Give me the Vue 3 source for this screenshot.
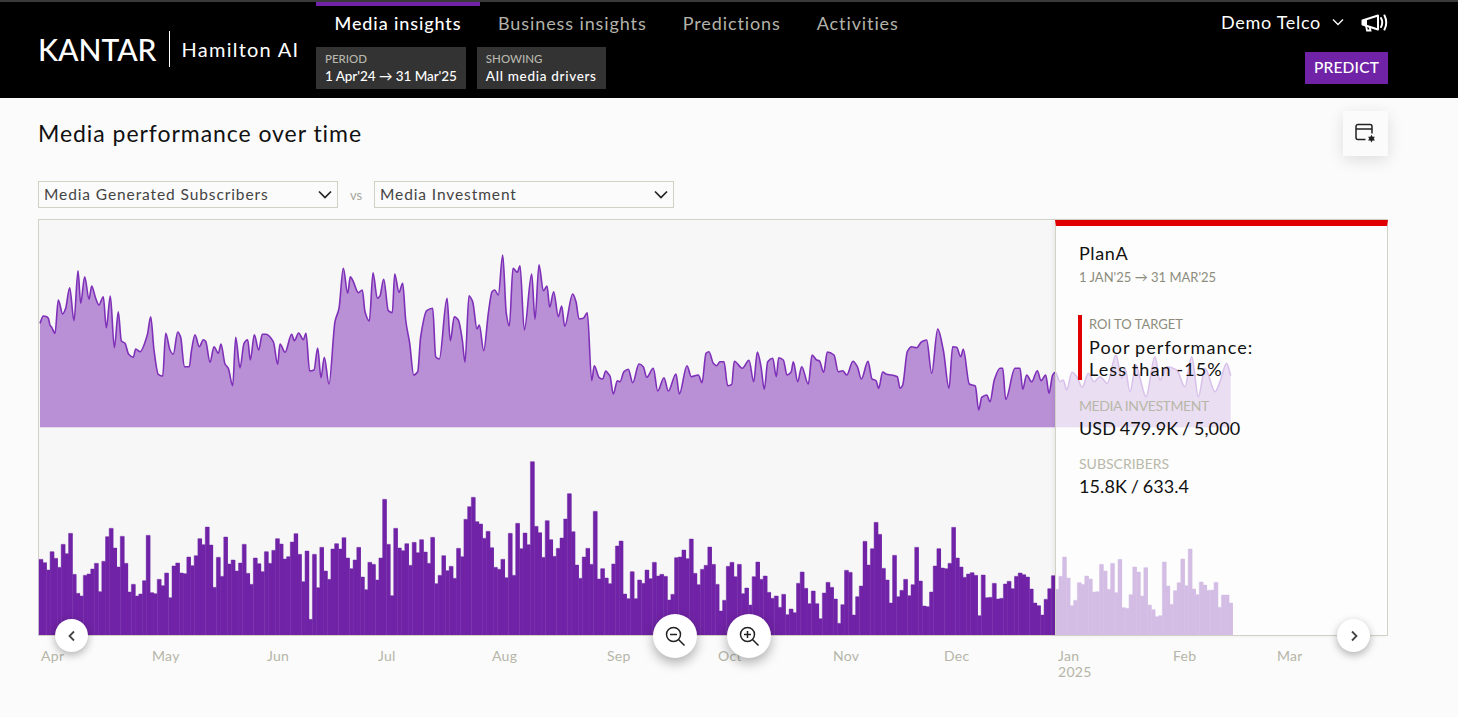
<script setup>
const tabs = ['Media insights', 'Business insights', 'Predictions', 'Activities']

// Daily bar tops, as read per chart section: [baseline, tops]
const barSections = [
  [555, [328,338,360,305,325,352,283,311,250,373,430,438,376,372,357,340,425,334,260,235,294,351,259,340,426,403,438,432,392,256,428,431,388,407,369,443,348,339,369,371,321,347,317,266,284,231,285,412,322,379,261,342,330,363,339,283,370,403,324,341,365,305,340,301,266,282,327,320,276,251,313,395,303,508,313,413,292,363,388]],
  [555, [297,281,297,263,324,356,330,292,381,419,337,343,390,324,148,283,437,235,294,302,281,346,277,308,269,306,340,262,401,376,317,362,349,385,295,320,208,170,142,215,222,265,244,293,352,358,328,383,250,376,220,296,249,284,35,229,248,322,212,269,319,295,264,207,131,245,345,385,321,295,343,184,387,356,384,401,342,288,273]],
  [405, [282,296,215,296,240,250,210,236,187,228,223,229,300,283,173,171,150,176,117,220,254,208,196,141,193,253,333,301,199,187,230,193,281,264,315,230,186,238,228,277,295,288,322,283,344,327,338,250,216,265,311,273,311,356,279,247,262,297,370,314,211,217,345,290,258,124,195,146,67,103,205,240,309,166,290,271,238,287]],
  [405, [254,142,243,318,320,276,198,146,204,206,190,82,174,201,232,222,218,226,347,225,293,292,250,297,295,252,244,266,229,219,224,231,267,309,317,345,298,266,227,268,229,171,234,317,301,248,253,228,237,276,275,193,213,268,190,278,178,323,325,284,201,216,288,203,315,329,350,347,186,258,313,272,248,177,257,147,267,284,246,255,271,270,247,322,285,285,309]],
]
const heights = barSections.flatMap(([base, tops]) => tops.map((t) => (base - t) / 3))
const barStart = 39
const barStep = (1232.5 - barStart) / heights.length
const barBase = 635
const bars = heights.map((h, i) => ({
  x: barStart + i * barStep,
  y: barBase - h,
  w: barStep + 0.4,
  h,
}))
// Stepped outline that gives the bars their pale top edge
const barOutline =
  `M${barStart} ${barBase}` +
  bars.map((b) => `V${b.y.toFixed(1)}H${(b.x + barStep).toFixed(1)}`).join('') +
  `V${barBase}`

// Line samples per chart section: [originX, originY, flat x,y list at 3x]
const lineSections = [
  [30, 240, [30,250,40,228,50,230,55,235,60,255,65,262,75,280,85,180,98,222,107,205,119,143,132,242,144,92,152,190,164,110,177,178,185,138,197,175,207,195,220,170,229,263,241,168,253,323,265,215,274,302,285,310,296,343,310,352,317,327,330,335,352,285,362,230,372,330,385,403,398,408,407,280,420,330,430,343,443,276,452,292,463,380,478,380,484,335,495,284,508,320,520,299,527,304,540,367,552,320,565,340,573,312,585,372,595,385,608,437,617,292,630,384,642,310,653,299,661,360,673,284,686,330,697,283,708,283,730,305,743,373,750,312,765,337,785,283,793,302,806,279,820,299,828,280,839,393,852,390,863,324,873,413,883,352,897,432]],
  [320, 240, [45,245,57,205,70,85,83,160,91,110,100,125,115,158,127,150,135,215,148,243,159,98,172,175,180,168,191,118,205,212,217,218,224,102,237,157,248,130,257,240,269,310,281,405,293,395,302,290,320,212,338,205,347,350,358,357,381,175,391,302,403,230,415,240,427,300,435,367,447,167,458,185,471,267,478,255,491,332,505,220,516,155,524,150,535,165,548,45,559,220,568,258,579,85,592,97,600,77,613,270,635,102,645,238,657,74,670,152,681,138,689,202,701,155,715,230,725,198,734,259,758,162,768,185,777,237,790,235,802,218,815,422,823,377,837,412,848,417,857,393,866,403]],
  [610, 320, [0,168,10,222,22,182,30,185,42,155,55,148,68,188,87,132,100,140,110,172,130,145,143,213,162,173,175,213,198,162,208,222,231,137,244,170,265,165,276,188,288,100,297,95,310,130,320,137,330,125,342,125,353,197,365,193,373,124,397,145,417,121,431,185,442,96,453,140,463,208,473,125,488,115,499,170,506,113,520,120,531,165,543,157,550,125,563,185,575,140,595,192,606,105,620,120,628,122,641,157,652,96,672,105,685,155,698,152,710,165,729,124,742,140,754,177,774,124,786,177,798,182,806,205,818,156,830,163,845,165,862,170]],
  [900, 310, [0,235,8,225,22,125,35,110,50,113,65,95,80,90,95,190,113,57,130,120,147,235,158,110,170,112,182,140,190,118,208,222,226,228,236,300,245,262,260,255,270,275,283,210,300,175,308,175,317,268,345,175,360,175,368,238,380,195,395,215,412,182,423,212,437,195,447,250,458,195,466,187,480,215,490,210,500,240,516,187,530,200,547,232,565,190,582,215,600,200,622,220,648,135,665,205,675,175,690,245,708,165,720,205,738,260,765,140,780,210,800,170,830,180,855,230,875,140,895,260,915,175,945,245,960,215,980,160,992,197]],
]
const points = lineSections.flatMap(([ox, oy, list]) => {
  const out = []
  for (let i = 0; i < list.length; i += 2) {
    out.push([ox + list[i] / 3, oy + list[i + 1] / 3])
  }
  return out
})

function monotonePath(pts) {
  const n = pts.length
  const slopes = pts.slice(0, -1).map((p, i) => (pts[i + 1][1] - p[1]) / (pts[i + 1][0] - p[0]))
  const m = pts.map((_, i) => {
    if (i === 0) return slopes[0]
    if (i === n - 1) return slopes[n - 2]
    const a = slopes[i - 1]
    const b = slopes[i]
    return a * b <= 0 ? 0 : (2 * a * b) / (a + b)
  })
  let d = `M${pts[0][0].toFixed(1)} ${pts[0][1].toFixed(1)}`
  for (let i = 0; i < n - 1; i++) {
    const h = (pts[i + 1][0] - pts[i][0]) / 3
    d += `C${(pts[i][0] + h).toFixed(1)} ${(pts[i][1] + m[i] * h).toFixed(1)} ${(pts[i + 1][0] - h).toFixed(1)} ${(pts[i + 1][1] - m[i + 1] * h).toFixed(1)} ${pts[i + 1][0].toFixed(1)} ${pts[i + 1][1].toFixed(1)}`
  }
  return d
}
const linePath = monotonePath(points)
const first = points[0]
const last = points[points.length - 1]
const areaPath = `${linePath}L${last[0]} 427L${first[0]} 427Z`

const months = [
  ['Apr', 41], ['May', 152], ['Jun', 267], ['Jul', 378], ['Aug', 492], ['Sep', 607],
  ['Oct', 718], ['Nov', 833], ['Dec', 944], ['Jan', 1058], ['Feb', 1173], ['Mar', 1277],
]
</script>

<template>
  <div class="page">
    <header class="topbar">
      <div class="brand">
        <span class="logo">KANTAR</span>
        <span class="product">Hamilton AI</span>
      </div>
      <div class="centre">
        <nav class="tabs">
          <a v-for="(t, i) in tabs" :key="t" class="tab" :class="{ active: i === 0 }">{{ t }}</a>
        </nav>
        <div class="chips">
          <div class="chip">
            <span class="chip-label">PERIOD</span>
            <span class="chip-value tight">1 Apr'24 → 31 Mar'25</span>
          </div>
          <div class="chip">
            <span class="chip-label">SHOWING</span>
            <span class="chip-value wide">All media drivers</span>
          </div>
        </div>
      </div>
      <div class="right">
        <div class="account">
          <span class="client">Demo Telco</span>
          <svg class="client-chev" width="12" height="8" viewBox="0 0 12 8"><path d="M1 1.500l5 5 5-5" fill="none" stroke="#fff" stroke-width="1.300" /></svg>
          <svg class="mega" width="27" height="18" viewBox="0 0 27 18" fill="none" stroke="#fff">
            <path d="M1.500 6.500L17 1.500v14L1.500 10.500z" stroke-width="2" stroke-linejoin="round" />
            <path d="M1 6h5v5H1z" fill="#fff" stroke="none" />
            <path d="M5 11.500l1 5h3.500l-1-4" stroke-width="1.800" />
            <path d="M20 4q2.500 4.500 0 9M23.500 1.500q3.500 7 0 14" stroke-width="2" stroke-linecap="round" />
          </svg>
        </div>
        <button class="predict">PREDICT</button>
      </div>
    </header>

    <main class="content">
      <div class="title-row">
        <h1>Media performance over time</h1>
        <button class="config" aria-label="Configure">
          <svg width="22" height="22" viewBox="0 0 22 22" fill="none" stroke="#222">
            <path d="M10.500 16.500H3A2 2 0 0 1 1 14.500V3.500A2 2 0 0 1 3 1.500h12A2 2 0 0 1 17 3.500V10.500M1 6h16" stroke-width="1.500" />
            <path d="M16.500 11.700l1.100 2h2.300l-1.100 1.900 1.100 1.900h-2.300l-1.100 2-1.100-2h-2.300l1.100-1.900-1.100-1.900h2.300z" fill="#222" stroke="none" />
          </svg>
        </button>
      </div>

      <div class="selects">
        <div class="select">
          <span>Media Generated Subscribers</span>
          <svg width="14" height="9" viewBox="0 0 14 9"><path d="M1 1.500l6 6 6-6" fill="none" stroke="#222" stroke-width="1.700" /></svg>
        </div>
        <span class="vs">vs</span>
        <div class="select">
          <span>Media Investment</span>
          <svg width="14" height="9" viewBox="0 0 14 9"><path d="M1 1.500l6 6 6-6" fill="none" stroke="#222" stroke-width="1.700" /></svg>
        </div>
      </div>

      <section class="chart">
        <svg class="plot" width="1350" height="470" viewBox="38 219 1350 470">
          <rect x="38.500" y="219.500" width="1349" height="416" fill="#f7f7f7" stroke="#d2d2c4" />
          <rect x="40" y="427" width="1191" height="1" fill="#e4d8ee" />
          <path :d="areaPath" fill="#b98fd6" />
          <path :d="linePath" fill="none" stroke="#7e30b8" stroke-width="1.600" />
          <path :d="barOutline" fill="none" stroke="#b79ad2" stroke-width="1" />
          <g class="bars">
            <rect v-for="(b, i) in bars" :key="i" :x="b.x" :y="b.y" :width="b.w" :height="b.h" />
          </g>
          <g class="months">
            <text v-for="m in months" :key="m[0]" :x="m[1]" y="661">{{ m[0] }}</text>
            <text x="1058" y="677">2025</text>
          </g>
        </svg>

        <aside class="panel">
          <div class="plan">PlanA</div>
          <div class="dates">1 JAN'25 → 31 MAR'25</div>
          <div class="roi">
            <div class="roi-label">ROI TO TARGET</div>
            <div class="roi-value">Poor performance:<br />Less than -15%</div>
          </div>
          <div class="metric">
            <div class="metric-label narrow">MEDIA INVESTMENT</div>
            <div class="metric-value">USD 479.9K / 5,000</div>
          </div>
          <div class="metric">
            <div class="metric-label">SUBSCRIBERS</div>
            <div class="metric-value">15.8K / 633.4</div>
          </div>
        </aside>

        <button class="round small prev" aria-label="Previous">
          <svg width="10" height="12" viewBox="0 0 10 12"><path d="M7 1.500L2.500 6 7 10.500" fill="none" stroke="#444" stroke-width="1.800" /></svg>
        </button>
        <button class="round large zoom-out" aria-label="Zoom out">
          <svg width="22" height="22" viewBox="0 0 22 22" fill="none" stroke="#222" stroke-width="1.500">
            <circle cx="9.500" cy="9.500" r="7" /><path d="M6 9.500h7M14.500 14.500l6 6" />
          </svg>
        </button>
        <button class="round large zoom-in" aria-label="Zoom in">
          <svg width="22" height="22" viewBox="0 0 22 22" fill="none" stroke="#222" stroke-width="1.500">
            <circle cx="9.500" cy="9.500" r="7" /><path d="M6 9.500h7M9.500 6v7M14.500 14.500l6 6" />
          </svg>
        </button>
        <button class="round small next" aria-label="Next">
          <svg width="10" height="12" viewBox="0 0 10 12"><path d="M3 1.500L7.500 6 3 10.500" fill="none" stroke="#444" stroke-width="1.800" /></svg>
        </button>
      </section>
    </main>
  </div>
</template>

<style>
html, body { margin: 0; background: #fbfbfb; overflow: hidden; }
</style>

<style scoped>
.page {
  width: 1458px;
  height: 717px;
  background: #fbfbfb;
  font-family: Lato, "Noto Sans", sans-serif;
  color: #111;
  overflow: hidden;
}
.topbar {
  box-sizing: border-box;
  height: 98px;
  background: #000;
  border-top: 2px solid #3a3a3a;
  display: flex;
  padding: 0 70px 0 38px;
}
.brand { display: flex; align-items: center; width: 278px; margin-top: -3px; }
.logo {
  font-size: 30px;
  line-height: 36px;
  font-weight: 500;
  color: #fff;
  padding-right: 12px;
  border-right: 1.500px solid #fff;
}
.product { font-size: 20px; color: #fff; margin-left: 12px; letter-spacing: 1.250px; }
.centre { display: flex; flex-direction: column; }
.tabs { display: flex; height: 45px; }
.tab {
  padding: 3px 18px 0;
  font-size: 18px;
  line-height: 28px;
  letter-spacing: 0.900px;
  color: #b3b3aa;
  border-top: 4px solid transparent;
  height: 41px;
  box-sizing: border-box;
}
.tab.active { color: #fff; border-top-color: #7023a6; font-weight: 500; letter-spacing: 0.900px; padding: 3px 18.500px 0; }
.chips { display: flex; gap: 11px; }
.chip {
  background: #333;
  height: 42px;
  box-sizing: border-box;
  padding: 4px 9px 3px;
  display: flex;
  flex-direction: column;
  justify-content: center;
}
.chip-label { font-size: 11.500px; line-height: 15px; color: #b8b8ae; font-weight: 500; }
.chip-value { font-size: 13.500px; line-height: 19px; margin-top: 1px; color: #fff; font-weight: 500; }
.chip-value.tight { letter-spacing: -0.050px; }
.chip-value.wide { letter-spacing: 0.700px; }
.right { margin-left: auto; display: flex; flex-direction: column; align-items: flex-end; }
.account { display: flex; align-items: center; height: 40px; }
.client { font-size: 18px; color: #fff; letter-spacing: 0.700px; }
.client-chev { margin-left: 11px; }
.mega { margin-left: 17px; margin-top: 2px; }
.predict {
  margin-top: 10px;
  width: 83px;
  height: 32px;
  padding: 0 0 2px;
  border: 0;
  background: #7023a6;
  color: #fff;
  font: 500 15.500px Lato, sans-serif;
  letter-spacing: 0.200px;
}
.content { padding: 13px 70px 0 38px; }
.title-row { display: flex; justify-content: space-between; align-items: flex-start; height: 70px; }
h1 { margin: 7px 0 0; font-size: 23px; line-height: 30px; font-weight: 400; letter-spacing: 0.950px; }
.config {
  width: 45px;
  height: 45px;
  border: 0;
  padding: 0;
  background: #fbfbfb;
  box-shadow: 0 4px 16px rgba(0, 0, 0, 0.12);
  display: flex;
  align-items: center;
  justify-content: center;
}
.selects { display: flex; align-items: center; height: 27px; }
.select {
  box-sizing: border-box;
  width: 300px;
  height: 27px;
  border: 1px solid #d2d2c4;
  background: #fbfbfb;
  padding: 0 5px 2px;
  display: flex;
  align-items: center;
  justify-content: space-between;
  font-size: 15.500px;
  letter-spacing: 0.900px;
  color: #444;
}
.select svg { margin-top: 2px; }
.vs { width: 36px; text-align: center; font-size: 13px; color: #a8a89c; }
.chart { position: relative; margin-top: 11px; width: 1350px; height: 470px; }
.plot { display: block; }
.bars rect { fill: #7023a6; }
.months text { font-family: Lato, sans-serif; font-size: 14px; fill: #b5b5a8; letter-spacing: 0.3px; }
.panel {
  position: absolute;
  left: 1017px;
  top: 1px;
  width: 333px;
  height: 416px;
  box-sizing: border-box;
  background: rgba(255, 255, 255, 0.7);
  border-top: 6px solid #e00000;
  border-left: 1px solid #d2d2c4;
  border-right: 1px solid #d2d2c4;
  border-bottom: 1px solid #d2d2c4;
  padding: 16px 0 0 23px;
  box-shadow: -2px 0 4px rgba(0, 0, 0, 0.06);
}
.plan { font-size: 18px; line-height: 22px; letter-spacing: 0.600px; }
.dates { font-size: 13px; line-height: 18px; margin-top: 4px; color: #8c8c7c; }
.roi {
  margin-top: 29px;
  border-left: 4px solid #e00000;
  padding-left: 7px;
  height: 65px;
  box-sizing: border-box;
  margin-left: -1px;
}
.roi-label { font-size: 13px; line-height: 19px; color: #8c8c7c; margin-top: 2px; }
.roi-value { font-size: 18px; line-height: 22px; letter-spacing: 1.100px; word-spacing: -1px; margin-top: 2px; white-space: nowrap; }
.metric { margin-top: 16px; }
.metric + .metric { margin-top: 15px; }
.metric-label { font-size: 14px; line-height: 20px; color: #b8b8a8; }
.metric-label.narrow { letter-spacing: -0.400px; }
.metric-value { font-size: 18px; line-height: 22px; letter-spacing: 0.100px; word-spacing: -1px; margin-top: 1px; }
.round {
  position: absolute;
  border: 0;
  padding: 0;
  border-radius: 50%;
  background: #fff;
  box-shadow: 0 3px 8px rgba(0, 0, 0, 0.3);
  display: flex;
  align-items: center;
  justify-content: center;
}
.small { width: 33px; height: 33px; top: 400px; }
.large { width: 44px; height: 44px; top: 395px; box-shadow: 0 5px 12px rgba(0, 0, 0, 0.3); }
.prev { left: 17px; }
.next { left: 1299px; }
.zoom-out { left: 615px; }
.zoom-in { left: 689px; }
</style>
